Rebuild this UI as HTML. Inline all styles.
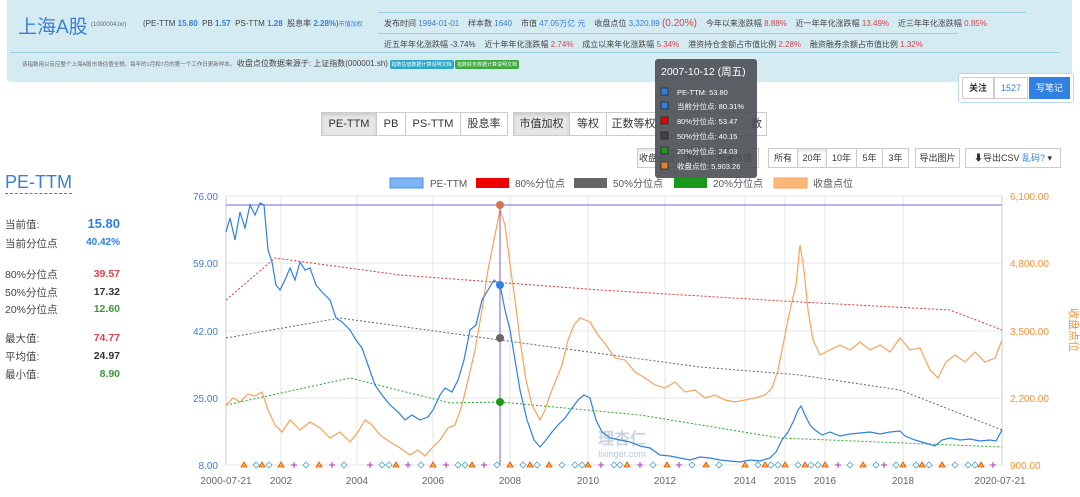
<!DOCTYPE html>
<html><head><meta charset="utf-8"><style>
*{box-sizing:border-box;margin:0;padding:0}
body{width:1080px;height:497px;overflow:hidden;background:#fff;font-family:"Liberation Sans","Noto Sans CJK SC",sans-serif;font-size:8px;color:#555;position:relative}
.abs{position:absolute;white-space:nowrap}
.hdr{position:absolute;left:7px;top:0;width:1065px;height:82px;background:#d4ebf2;border-radius:0 0 4px 4px}
.b{color:#3b7fd4}.r{color:#d9434b}.g{color:#3a9a3a}
.btn{position:absolute;border:1px solid #ccc;background:#fff;font-size:11px;color:#333;text-align:center;line-height:22px;height:24px}
.on{background:#e6e6e6;box-shadow:inset 0 2px 3px rgba(0,0,0,.12)}
.sb{position:absolute;border:1px solid #ccc;background:#fff;font-size:9px;color:#333;text-align:center;line-height:18px;height:20px}
.lbl{position:absolute;left:5px;font-size:10.5px;color:#444}
.tag{display:inline-block;font-size:5px;color:#fff;padding:1px 2px;border-radius:2px;vertical-align:middle}
</style></head><body>
<div class="hdr"></div>
<div class="abs" style="left:18px;top:12px;font-size:19px;color:#3b7fd4">上海A股</div>
<div class="abs" style="left:91px;top:22px;font-size:6px;color:#666">(1000004.lxr)</div>
<div class="abs" style="left:143px;top:18px;font-size:8px;color:#444">(PE-TTM <b class="b">15.80</b>&nbsp; PB <b class="b">1.57</b>&nbsp; PS-TTM <b class="b">1.28</b>&nbsp; 股息率 <b class="b">2.28%</b>)<span style="font-size:6px" class="b">市值加权</span></div>
<div class="abs" style="left:378px;top:12px;width:648px;border-top:1px solid #9fcde0"></div>
<div class="abs" style="left:384px;top:18px;font-size:8px;color:#444">发布时间 <span class="b">1994-01-01</span>&nbsp;&nbsp;&nbsp; 样本数 <span class="b">1640</span>&nbsp;&nbsp;&nbsp; 市值 <span class="b">47.05万亿 元</span>&nbsp;&nbsp;&nbsp; 收盘点位 <span class="b">3,320.89</span> <span class="r" style="font-size:10px">(0.20%)</span>&nbsp;&nbsp;&nbsp; 今年以来涨跌幅 <span class="r">8.88%</span>&nbsp;&nbsp;&nbsp; 近一年年化涨跌幅 <span class="r">13.49%</span>&nbsp;&nbsp;&nbsp; 近三年年化涨跌幅 <span class="r">0.85%</span></div>
<div class="abs" style="left:378px;top:33px;width:580px;border-top:1px solid #9fcde0"></div>
<div class="abs" style="left:384px;top:39px;font-size:8px;color:#444">近五年年化涨跌幅 <span>-3.74%</span>&nbsp;&nbsp;&nbsp; 近十年年化涨跌幅 <span class="r">2.74%</span>&nbsp;&nbsp;&nbsp; 成立以来年化涨跌幅 <span class="r">5.34%</span>&nbsp;&nbsp;&nbsp; 港资持仓金额占市值比例 <span class="r">2.28%</span>&nbsp;&nbsp;&nbsp; 融资融券余额占市值比例 <span class="r">1.32%</span></div>
<div class="abs" style="left:10px;top:52px;width:1050px;border-top:1px solid #9fcde0"></div>
<div class="abs" style="left:22px;top:58px;font-size:5.5px;color:#666">该指数用以反应整个上海A股市场估值全貌。每年的1月和7月的第一个工作日更新样本。 <span style="font-size:8px;color:#444">收盘点位数据来源于: 上证指数(000001.sh)</span> <span class="tag" style="background:#2aa7c9">指数估值数据计算说明文档</span> <span class="tag" style="background:#3aa83a">指数财务数据计算说明文档</span></div>
<div class="abs" style="left:958px;top:73px;width:116px;height:30px;border:1px solid #b8dcea;border-radius:3px;background:#fff"></div>
<div class="abs" style="left:962px;top:77px;width:32px;height:22px;border:1px solid #ccc;font-size:9px;font-weight:bold;color:#333;text-align:center;line-height:20px">关注</div>
<div class="abs" style="left:994px;top:77px;width:34px;height:22px;border:1px solid #ccc;font-size:9px;color:#3b7fd4;text-align:center;line-height:20px">1527</div>
<div class="abs" style="left:1029px;top:77px;width:41px;height:22px;background:#2f80e0;font-size:9px;color:#fff;text-align:center;line-height:22px">写笔记</div>

<div class="btn on" style="left:321px;top:112px;width:56px">PE-TTM</div>
<div class="btn" style="left:376px;top:112px;width:30px">PB</div>
<div class="btn" style="left:405px;top:112px;width:56px">PS-TTM</div>
<div class="btn" style="left:460px;top:112px;width:48px">股息率</div>
<div class="btn on" style="left:513px;top:112px;width:57px">市值加权</div>
<div class="btn" style="left:569px;top:112px;width:38px">等权</div>
<div class="btn" style="left:606px;top:112px;width:55px">正数等权</div>
<div class="btn" style="left:660px;top:112px;width:107px;text-align:right;padding-right:4px">数</div>

<div class="sb on" style="left:637px;top:148px;width:40px">收盘点位</div>
<div class="sb" style="left:676px;top:148px;width:34px">市值</div>
<div class="sb" style="left:709px;top:148px;width:50px">流通市值</div>
<div class="sb" style="left:768px;top:148px;width:30px">所有</div>
<div class="sb on" style="left:797px;top:148px;width:30px">20年</div>
<div class="sb" style="left:826px;top:148px;width:31px">10年</div>
<div class="sb" style="left:856px;top:148px;width:27px">5年</div>
<div class="sb" style="left:882px;top:148px;width:27px">3年</div>
<div class="sb" style="left:915px;top:148px;width:45px">导出图片</div>
<div class="sb" style="left:965px;top:148px;width:96px">&#11015;导出CSV <span class="b">乱码?</span> ▾</div>

<div class="abs" style="left:5px;top:172px;font-size:18px;color:#3b7fd4;border-bottom:1px dashed #3b7fd4">PE-TTM</div>
<div class="lbl" style="top:217px">当前值:</div><div class="abs" style="left:85px;top:216px;font-size:13px;font-weight:bold;color:#2f80e0;width:35px;text-align:right">15.80</div>
<div class="lbl" style="top:236px">当前分位点</div><div class="abs" style="left:70px;top:237px;font-size:10px;font-weight:bold;color:#2f80e0;width:50px;text-align:right">40.42%</div>
<div class="lbl" style="top:267px">80%分位点</div><div class="abs" style="left:70px;top:268px;font-size:10.5px;font-weight:bold;width:50px;text-align:right"><span class="r">39.57</span></div>
<div class="lbl" style="top:285px">50%分位点</div><div class="abs" style="left:70px;top:286px;font-size:10.5px;font-weight:bold;color:#333;width:50px;text-align:right">17.32</div>
<div class="lbl" style="top:302px">20%分位点</div><div class="abs" style="left:70px;top:303px;font-size:10.5px;font-weight:bold;width:50px;text-align:right"><span class="g">12.60</span></div>
<div class="lbl" style="top:331px">最大值:</div><div class="abs" style="left:70px;top:332px;font-size:10.5px;font-weight:bold;width:50px;text-align:right"><span class="r">74.77</span></div>
<div class="lbl" style="top:349px">平均值:</div><div class="abs" style="left:70px;top:350px;font-size:10.5px;font-weight:bold;color:#333;width:50px;text-align:right">24.97</div>
<div class="lbl" style="top:367px">最小值:</div><div class="abs" style="left:70px;top:368px;font-size:10.5px;font-weight:bold;width:50px;text-align:right"><span class="g">8.90</span></div>

<svg class="abs" style="left:0;top:0" width="1080" height="497" font-family="Liberation Sans" font-size="10">
<g font-size="10">
<rect x="390" y="178" width="33" height="10" fill="#7eb6f5" stroke="#4a90e2"/><text x="430" y="187" fill="#555">PE-TTM</text>
<rect x="476" y="178" width="33" height="10" fill="#e00"/><text x="515" y="187" fill="#555">80%分位点</text>
<rect x="574" y="178" width="33" height="10" fill="#666"/><text x="613" y="187" fill="#555">50%分位点</text>
<rect x="674" y="178" width="33" height="10" fill="#1a9a1a"/><text x="713" y="187" fill="#555">20%分位点</text>
<rect x="774" y="178" width="33" height="10" fill="#fcb77a" stroke="#f7a35c"/><text x="813" y="187" fill="#555">收盘点位</text>
</g>
<g stroke="#e6e6e6">
<line x1="226" y1="196" x2="1002" y2="196"/><line x1="226" y1="263" x2="1002" y2="263"/><line x1="226" y1="331" x2="1002" y2="331"/><line x1="226" y1="398" x2="1002" y2="398"/><line x1="226" y1="465" x2="1002" y2="465"/>
<line x1="281" y1="196" x2="281" y2="465"/><line x1="357" y1="196" x2="357" y2="465"/><line x1="433" y1="196" x2="433" y2="465"/><line x1="510" y1="196" x2="510" y2="465"/><line x1="588" y1="196" x2="588" y2="465"/><line x1="665" y1="196" x2="665" y2="465"/><line x1="745" y1="196" x2="745" y2="465"/><line x1="785" y1="196" x2="785" y2="465"/><line x1="825" y1="196" x2="825" y2="465"/><line x1="903" y1="196" x2="903" y2="465"/>
</g>
<line x1="226" y1="196" x2="226" y2="465" stroke="#ccd"/><line x1="1002" y1="196" x2="1002" y2="465" stroke="#ccd"/>
<g fill="#3b7fd4" text-anchor="end" font-size="10"><text x="218" y="200">76.00</text><text x="218" y="267">59.00</text><text x="218" y="335">42.00</text><text x="218" y="402">25.00</text><text x="218" y="469">8.00</text></g>
<g fill="#f0923a" font-size="10"><text x="1010" y="200">6,100.00</text><text x="1010" y="267">4,800.00</text><text x="1010" y="335">3,500.00</text><text x="1010" y="402">2,200.00</text><text x="1010" y="469">900.00</text></g>
<text x="1070" y="330" fill="#f0923a" font-size="11" transform="rotate(90 1070 330)" text-anchor="middle">收盘点位</text>
<g fill="#666" font-size="10" text-anchor="middle"><text x="226" y="484">2000-07-21</text><text x="281" y="484">2002</text><text x="357" y="484">2004</text><text x="433" y="484">2006</text><text x="510" y="484">2008</text><text x="588" y="484">2010</text><text x="665" y="484">2012</text><text x="745" y="484">2014</text><text x="785" y="484">2015</text><text x="825" y="484">2016</text><text x="903" y="484">2018</text><text x="1000" y="484">2020-07-21</text></g>
<text x="622" y="444" fill="#c8d4dc" font-size="16" font-weight="bold" text-anchor="middle">理杏仁</text>
<text x="622" y="457" fill="#b8c8d4" font-size="9" text-anchor="middle">lixinger.com</text>
<line x1="226" y1="205" x2="1002" y2="205" stroke="#6a6adf"/>
<polyline fill="none" stroke="#d33" stroke-width="1" stroke-dasharray="2,2" points="226,300 275,258 400,275 600,290 800,302 950,310 1002,330"/>
<polyline fill="none" stroke="#666" stroke-width="1" stroke-dasharray="2,2" points="226,338 340,318 500,340 700,367 800,375 900,390 1002,430"/>
<polyline fill="none" stroke="#2a2" stroke-width="1" stroke-dasharray="2,2" points="226,405 350,378 450,403 500,402 640,415 780,438 1002,447"/>
<polyline fill="none" stroke="#f7a35c" stroke-width="1.2" points="226,405 233,398 240,402 248,394 255,396 262,392 268,410 275,425 282,432 290,420 300,430 310,422 320,428 330,438 340,432 350,442 358,432 365,420 372,425 380,435 390,442 400,448 410,455 418,450 425,456 432,448 440,440 448,428 455,425 462,405 468,380 475,350 482,310 488,270 494,240 500,210 505,225 510,265 515,300 520,340 526,380 532,405 540,420 545,410 550,395 556,380 562,365 568,340 574,325 580,318 590,322 598,335 606,345 615,358 625,360 635,372 645,378 655,385 665,388 675,382 685,392 695,390 705,398 715,395 725,400 735,402 745,400 755,398 765,395 772,388 778,370 784,340 790,310 796,285 800,245 804,270 808,310 813,340 820,355 830,350 840,345 850,350 860,342 870,350 880,345 890,352 900,338 910,350 920,348 930,370 938,378 946,362 955,355 965,362 975,352 985,362 995,358 1002,340"/>
<polyline fill="none" stroke="#2f7fe0" stroke-width="1.2" points="226,232 230,218 235,240 240,212 245,228 250,205 255,215 260,203 264,205 268,250 272,262 276,285 280,290 285,280 290,268 295,280 300,262 305,270 310,268 316,285 322,292 330,300 336,318 342,322 350,330 356,340 362,348 368,365 375,385 382,395 390,405 398,412 405,420 412,415 420,420 428,417 433,410 440,395 445,388 452,392 458,380 464,360 470,330 476,325 482,300 488,290 494,280 500,285 505,310 510,330 515,360 520,390 527,420 534,440 540,447 546,440 552,432 558,425 565,418 572,408 578,400 584,395 590,398 596,420 602,432 610,438 620,440 630,442 640,446 650,448 660,455 670,456 680,458 690,460 700,457 710,458 720,460 730,461 740,462 750,460 760,461 770,458 776,452 782,440 788,432 794,420 798,410 801,406 805,415 810,425 815,430 822,435 830,432 840,436 850,434 860,433 870,432 880,434 890,432 900,431 905,436 915,440 925,443 935,446 942,440 950,438 960,440 970,439 980,441 990,440 996,441 1002,430"/>
<line x1="500" y1="205" x2="500" y2="465" stroke="#8060c0"/>
<circle cx="500" cy="205" r="4" fill="#d9704a"/><circle cx="500" cy="285" r="4" fill="#2f7fe0"/><circle cx="500" cy="338" r="4" fill="#666"/><circle cx="500" cy="402" r="4" fill="#1a9a1a"/>
<g stroke="#e05000" fill="#f8b040" stroke-width="0.8">
<path d="M244 462l3 5h-6z"/><path d="M262 462l3 5h-6z"/><path d="M281 462l3 5h-6z"/><path d="M319 462l3 5h-6z"/><path d="M396 462l3 5h-6z"/><path d="M433 462l3 5h-6z"/><path d="M472 462l3 5h-6z"/><path d="M510 462l3 5h-6z"/><path d="M530 462l3 5h-6z"/><path d="M549 462l3 5h-6z"/><path d="M588 462l3 5h-6z"/><path d="M627 462l3 5h-6z"/><path d="M667 462l3 5h-6z"/><path d="M706 462l3 5h-6z"/><path d="M745 462l3 5h-6z"/><path d="M765 462l3 5h-6z"/><path d="M785 462l3 5h-6z"/><path d="M805 462l3 5h-6z"/><path d="M825 462l3 5h-6z"/><path d="M863 462l3 5h-6z"/><path d="M903 462l3 5h-6z"/><path d="M922 462l3 5h-6z"/><path d="M942 462l3 5h-6z"/><path d="M981 462l3 5h-6z"/>
</g>
<g stroke="#4aa3c8" fill="#fff" stroke-width="0.8">
<path d="M256 462l3 3-3 3-3-3z"/><path d="M269 462l3 3-3 3-3-3z"/><path d="M306 462l3 3-3 3-3-3z"/><path d="M344 462l3 3-3 3-3-3z"/><path d="M382 462l3 3-3 3-3-3z"/><path d="M389 462l3 3-3 3-3-3z"/><path d="M421 462l3 3-3 3-3-3z"/><path d="M458 462l3 3-3 3-3-3z"/><path d="M465 462l3 3-3 3-3-3z"/><path d="M497 462l3 3-3 3-3-3z"/><path d="M523 462l3 3-3 3-3-3z"/><path d="M537 462l3 3-3 3-3-3z"/><path d="M562 462l3 3-3 3-3-3z"/><path d="M575 462l3 3-3 3-3-3z"/><path d="M582 462l3 3-3 3-3-3z"/><path d="M614 462l3 3-3 3-3-3z"/><path d="M620 462l3 3-3 3-3-3z"/><path d="M653 462l3 3-3 3-3-3z"/><path d="M692 462l3 3-3 3-3-3z"/><path d="M719 462l3 3-3 3-3-3z"/><path d="M758 462l3 3-3 3-3-3z"/><path d="M771 462l3 3-3 3-3-3z"/><path d="M778 462l3 3-3 3-3-3z"/><path d="M798 462l3 3-3 3-3-3z"/><path d="M811 462l3 3-3 3-3-3z"/><path d="M818 462l3 3-3 3-3-3z"/><path d="M850 462l3 3-3 3-3-3z"/><path d="M876 462l3 3-3 3-3-3z"/><path d="M896 462l3 3-3 3-3-3z"/><path d="M916 462l3 3-3 3-3-3z"/><path d="M929 462l3 3-3 3-3-3z"/><path d="M955 462l3 3-3 3-3-3z"/><path d="M968 462l3 3-3 3-3-3z"/><path d="M975 462l3 3-3 3-3-3z"/>
</g>
<g stroke="#b030c0" stroke-width="1">
<path d="M294 462v6M291 465h6"/><path d="M332 462v6M329 465h6"/><path d="M370 462v6M367 465h6"/><path d="M408 462v6M405 465h6"/><path d="M446 462v6M443 465h6"/><path d="M484 462v6M481 465h6"/><path d="M601 462v6M598 465h6"/><path d="M640 462v6M637 465h6"/><path d="M679 462v6M676 465h6"/><path d="M838 462v6M835 465h6"/><path d="M884 462v6M881 465h6"/><path d="M993 462v6M990 465h6"/>
</g>
<g>
<rect x="655" y="59" width="102" height="119" rx="3" fill="#4a4f54" fill-opacity="0.9"/>
<text x="661" y="75" fill="#fff" font-size="10.5">2007-10-12 (周五)</text>
<g stroke="#222" stroke-width="0.7">
<rect x="661" y="88" width="7" height="7" fill="#2f7fe0"/><rect x="661" y="102" width="7" height="7" fill="#2f7fe0"/><rect x="661" y="117" width="7" height="7" fill="#e00"/><rect x="661" y="132" width="7" height="7" fill="#444"/><rect x="661" y="147" width="7" height="7" fill="#1a9a1a"/><rect x="661" y="162" width="7" height="7" fill="#e08030"/>
</g>
<g fill="#fff" font-size="7.5"><text x="677" y="95">PE-TTM: 53.80</text><text x="677" y="109">当前分位点: 80.31%</text><text x="677" y="124">80%分位点: 53.47</text><text x="677" y="139">50%分位点: 40.15</text><text x="677" y="154">20%分位点: 24.03</text><text x="677" y="169">收盘点位: 5,903.26</text></g>
</g>
</svg>
</body></html>
